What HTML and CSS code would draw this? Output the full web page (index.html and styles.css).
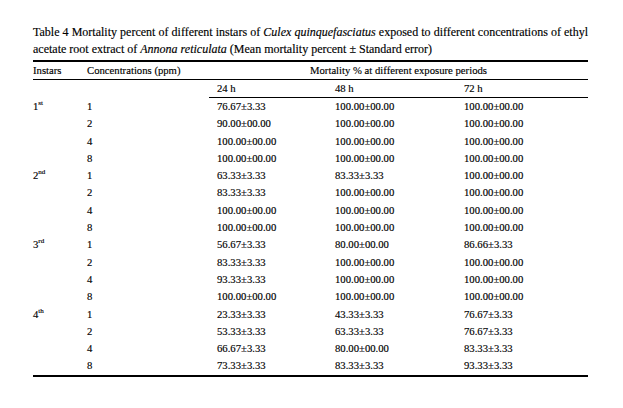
FILE: index.html
```html
<!DOCTYPE html>
<html>
<head>
<meta charset="utf-8">
<link rel="stylesheet" href="styles.css">
</head>
<body>
<div class="page">
  <p class="caption">Table 4 Mortality percent of different instars of <i>Culex quinquefasciatus</i> exposed to different concentrations of ethyl acetate root extract of <i>Annona reticulata</i> (Mean mortality percent ± Standard error)</p>
  <table class="data">
    <colgroup>
      <col class="w1">
      <col class="w2">
      <col class="w3">
      <col class="w4">
      <col class="w5">
    </colgroup>
    <thead>
      <tr class="h1">
        <th>Instars</th>
        <th>Concentrations (ppm)</th>
        <th class="span" colspan="3">Mortality % at different exposure periods</th>
      </tr>
      <tr class="h2">
        <th></th>
        <th></th>
        <th class="t">24 h</th>
        <th class="t">48 h</th>
        <th class="t">72 h</th>
      </tr>
    </thead>
    <tbody>
      <tr><td>1<sup>st</sup></td><td>1</td><td class="v">76.67±3.33</td><td class="v">100.00±00.00</td><td class="v">100.00±00.00</td></tr>
      <tr><td></td><td>2</td><td class="v">90.00±00.00</td><td class="v">100.00±00.00</td><td class="v">100.00±00.00</td></tr>
      <tr><td></td><td>4</td><td class="v">100.00±00.00</td><td class="v">100.00±00.00</td><td class="v">100.00±00.00</td></tr>
      <tr><td></td><td>8</td><td class="v">100.00±00.00</td><td class="v">100.00±00.00</td><td class="v">100.00±00.00</td></tr>
      <tr><td>2<sup>nd</sup></td><td>1</td><td class="v">63.33±3.33</td><td class="v">83.33±3.33</td><td class="v">100.00±00.00</td></tr>
      <tr><td></td><td>2</td><td class="v">83.33±3.33</td><td class="v">100.00±00.00</td><td class="v">100.00±00.00</td></tr>
      <tr><td></td><td>4</td><td class="v">100.00±00.00</td><td class="v">100.00±00.00</td><td class="v">100.00±00.00</td></tr>
      <tr><td></td><td>8</td><td class="v">100.00±00.00</td><td class="v">100.00±00.00</td><td class="v">100.00±00.00</td></tr>
      <tr><td>3<sup>rd</sup></td><td>1</td><td class="v">56.67±3.33</td><td class="v">80.00±00.00</td><td class="v">86.66±3.33</td></tr>
      <tr><td></td><td>2</td><td class="v">83.33±3.33</td><td class="v">100.00±00.00</td><td class="v">100.00±00.00</td></tr>
      <tr><td></td><td>4</td><td class="v">93.33±3.33</td><td class="v">100.00±00.00</td><td class="v">100.00±00.00</td></tr>
      <tr><td></td><td>8</td><td class="v">100.00±00.00</td><td class="v">100.00±00.00</td><td class="v">100.00±00.00</td></tr>
      <tr><td>4<sup>th</sup></td><td>1</td><td class="v">23.33±3.33</td><td class="v">43.33±3.33</td><td class="v">76.67±3.33</td></tr>
      <tr><td></td><td>2</td><td class="v">53.33±3.33</td><td class="v">63.33±3.33</td><td class="v">76.67±3.33</td></tr>
      <tr><td></td><td>4</td><td class="v">66.67±3.33</td><td class="v">80.00±00.00</td><td class="v">83.33±3.33</td></tr>
      <tr class="last"><td></td><td>8</td><td class="v">73.33±3.33</td><td class="v">83.33±3.33</td><td class="v">93.33±3.33</td></tr>
    </tbody>
  </table>
</div>
</body>
</html>
```
FILE: styles.css
```css
html, body {
  margin: 0;
  padding: 0;
  background: #ffffff;
}
body {
  font-family: "Liberation Serif", "Times New Roman", serif;
  color: #000000;
  -webkit-text-stroke: 0.15px #000000;
}
.page {
  width: 555px;
  padding: 24px 0 0 33px;
}
.caption {
  margin: 0;
  font-size: 12px;
  line-height: 16.5px;
  text-align: justify;
}
.data {
  margin-top: 3px;
  width: 555px;
  border-collapse: separate;
  border-spacing: 0;
  table-layout: fixed;
  font-size: 10.7px;
}
.w1 { width: 54px; }
.w2 { width: 122px; }
.w3 { width: 118px; }
.w4 { width: 129px; }
.w5 { width: 132px; }
.data th,
.data td {
  padding: 0;
  font-weight: normal;
  text-align: left;
  white-space: nowrap;
  vertical-align: middle;
}
.h1 th {
  border-top: 2px solid #000;
  border-bottom: 1px solid #000;
  height: 17px;
  line-height: 17px;
}
.h1 th.span {
  text-align: center;
}
.h2 th {
  height: 17px;
  line-height: 17px;
  border-bottom: 1px solid transparent;
}
.h2 th.t {
  border-bottom-color: #000;
  padding-left: 8px;
}
.data tbody td {
  height: 17.3px;
  line-height: 17.3px;
}
.data td.v {
  padding-left: 8px;
}
.data tr.last td {
  border-bottom: 2px solid #000;
}
.data sup {
  font-size: 7px;
  line-height: 0;
  vertical-align: 5px;
}
```
